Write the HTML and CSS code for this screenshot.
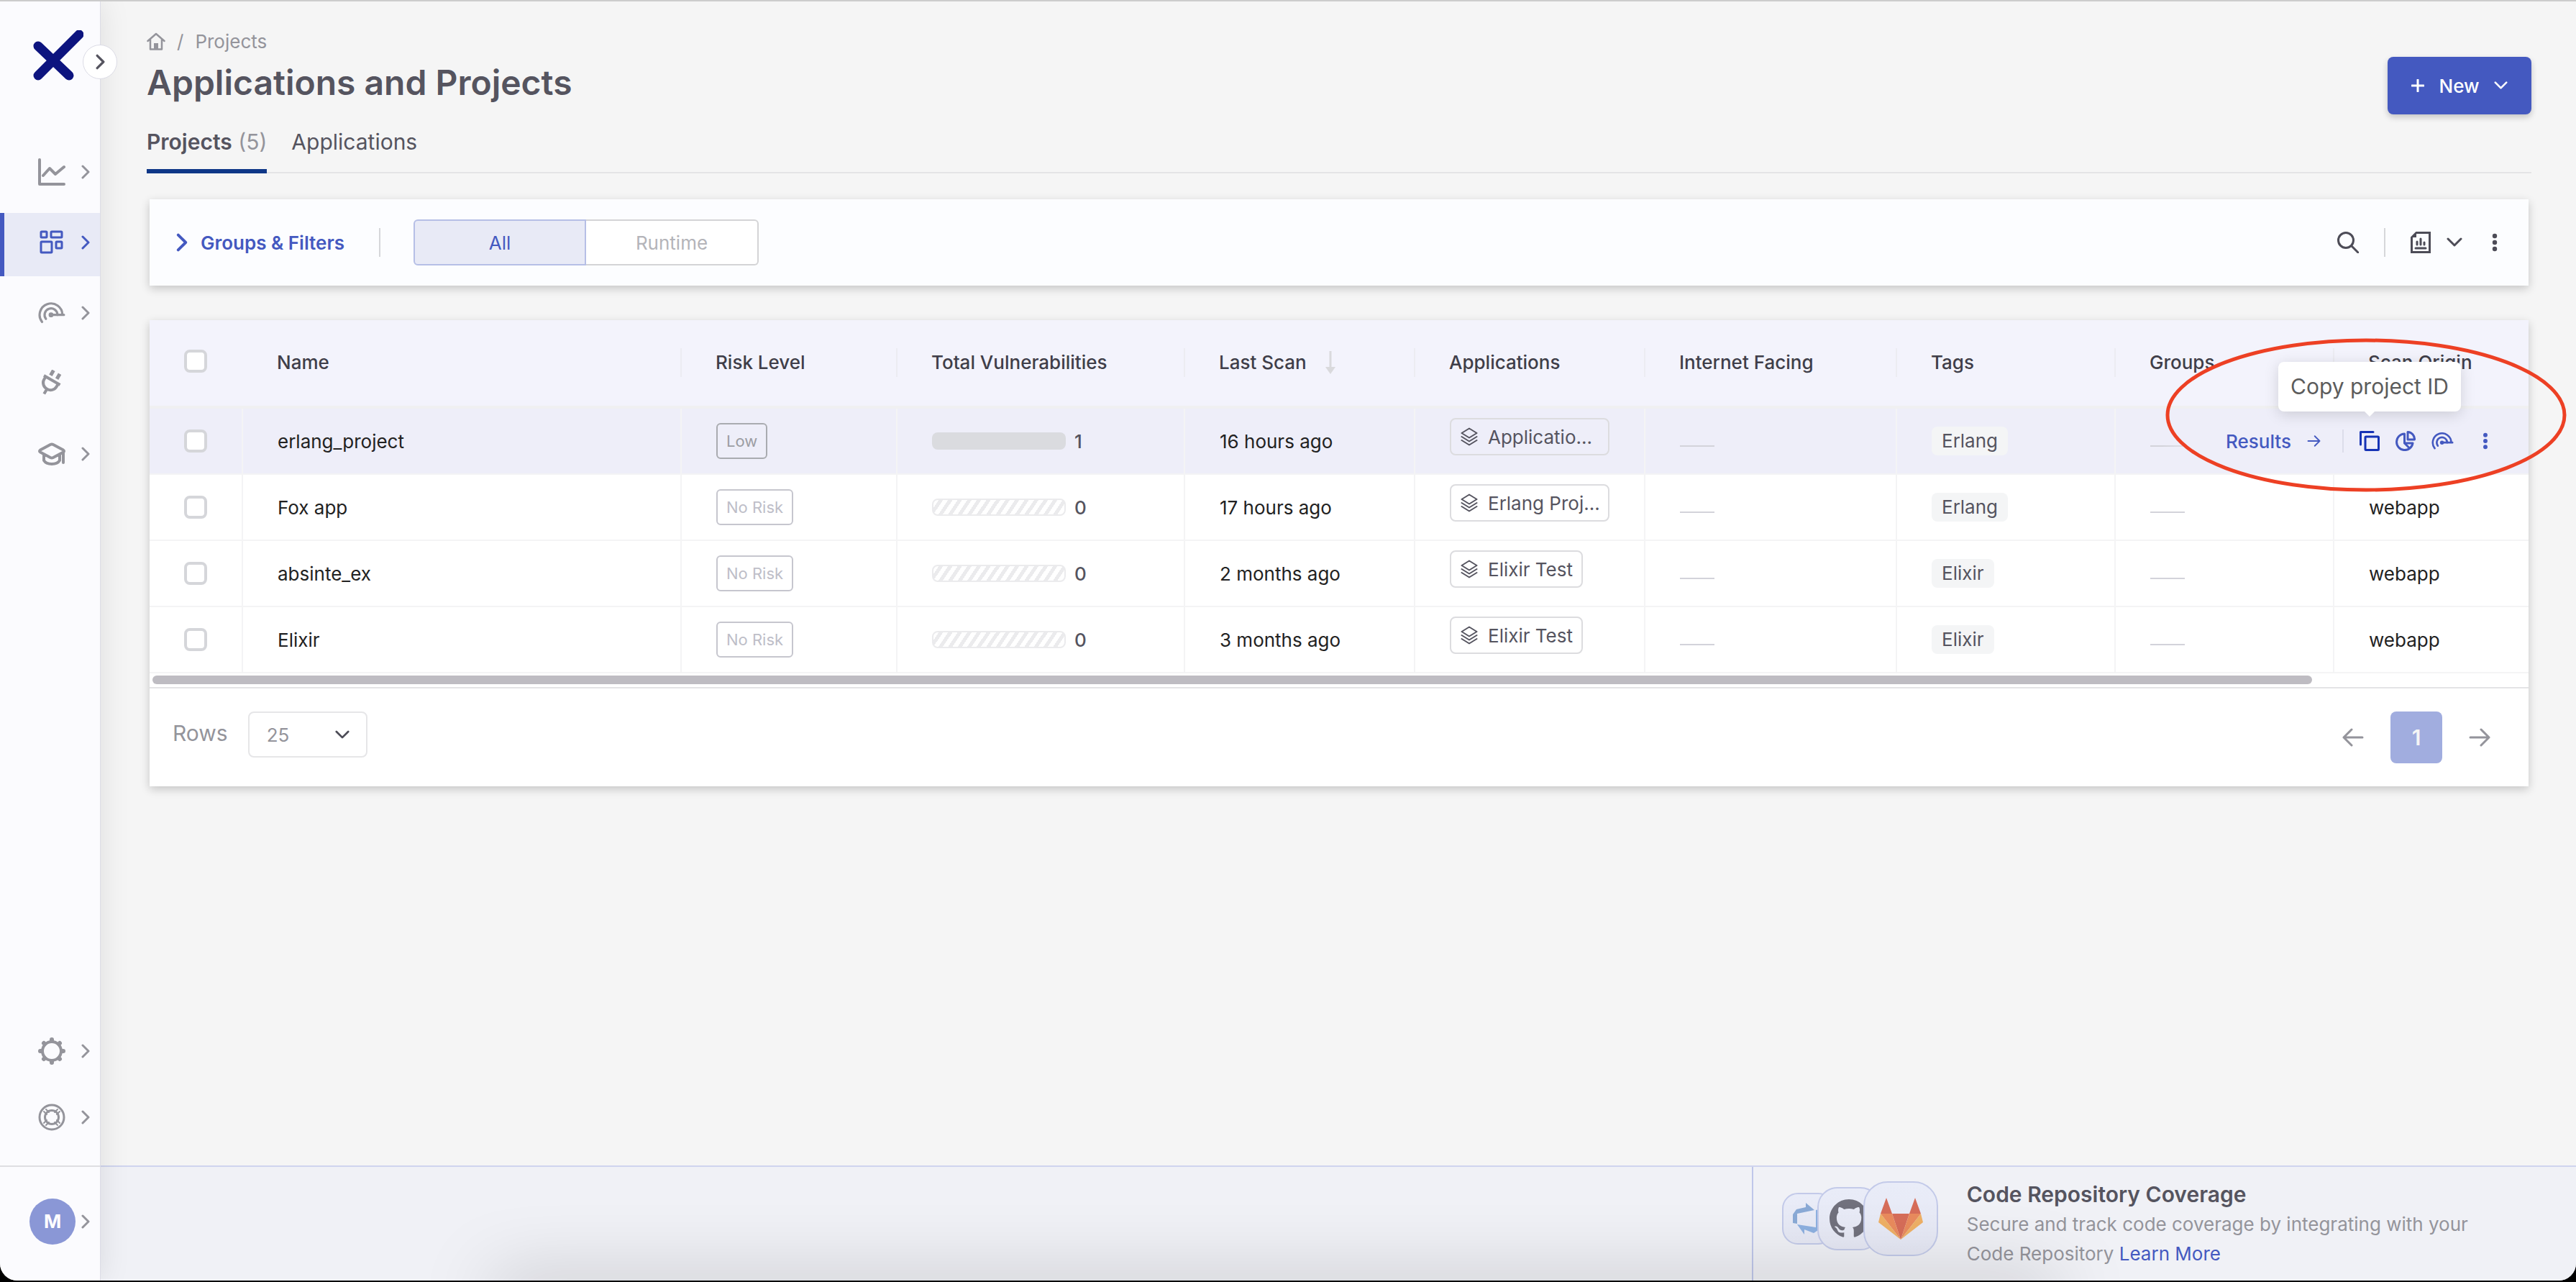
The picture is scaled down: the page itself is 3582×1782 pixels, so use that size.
FILE: index.html
```html
<!DOCTYPE html>
<html lang="en">
<head>
  <meta charset="UTF-8" />
  <meta name="viewport" content="width=device-width, initial-scale=1.0" />
  <title>Applications and Projects</title>
  <link rel="stylesheet" href="styles.css">
</head>
<body>
  <svg class="sprite" aria-hidden="true">
    <symbol id="chevron-right" viewBox="0 0 12 20"><path d="M2 2l8 8-8 8" /></symbol>
    <symbol id="chevron-down" viewBox="0 0 22 14"><path d="M2 2l9 9 9-9" /></symbol>
    <symbol id="arrow-right" viewBox="0 0 30 26"><path d="M2 13h26M17 2l11 11-11 11" /></symbol>
    <symbol id="gauge" viewBox="0 0 36 28"><path d="M5.200 25.800A15 15 0 1 1 32 16.500M17 16.500h17" /><path d="M10.300 21.800A8.500 8.500 0 1 1 25.500 16.500" /><circle cx="17" cy="16.500" r="3.200" fill="currentColor" stroke="none" /></symbol>
    <symbol id="layers" viewBox="0 0 24 26"><path d="M12 1.500l10.500 6.500L12 14.500 1.500 8zM1.500 13L12 19.500 22.500 13M1.500 18L12 24.500 22.500 18" /></symbol>
    <symbol id="dots" viewBox="0 0 8 26"><g fill="currentColor" stroke="none"><circle cx="4" cy="4" r="3.200" /><circle cx="4" cy="13" r="3.200" /><circle cx="4" cy="22" r="3.200" /></g></symbol>
  </svg>

  <div class="app">
    <aside class="sidebar">
      <a href="#" class="logo" aria-label="Home">
        <svg width="70" height="70" viewBox="0 0 70 70"><path d="M64 6L28 42 7 63M7 22l21 20 22 21" fill="none" stroke="#0d147f" stroke-width="13" stroke-linecap="round" stroke-linejoin="round" /></svg>
      </a>
      <button class="toggle" aria-label="Expand menu"><svg class="icon" width="13" height="22"><use href="#chevron-right" /></svg></button>

      <nav class="nav">
        <a href="#" aria-label="Overview">
          <svg class="icon" width="38" height="38" viewBox="0 0 38 38"><path d="M2 2v34h34M7 24l9-10 8 8 12-10" /></svg>
          <svg class="icon thin" width="12" height="20"><use href="#chevron-right" /></svg>
        </a>
        <a href="#" class="active" aria-label="Projects">
          <svg class="icon" width="38" height="38" viewBox="0 0 38 38"><rect x="4" y="4" width="8" height="8" rx="1" /><rect x="18" y="4" width="15" height="8" rx="1" /><rect x="4" y="18" width="15" height="15" rx="1" /><rect x="25" y="18" width="8" height="9" rx="1" /></svg>
          <svg class="icon thin" width="12" height="20"><use href="#chevron-right" /></svg>
        </a>
        <a href="#" aria-label="Analytics">
          <svg class="icon fine" width="38" height="30"><use href="#gauge" /></svg>
          <svg class="icon thin" width="12" height="20"><use href="#chevron-right" /></svg>
        </a>
        <a href="#" aria-label="Integrations">
          <svg class="icon" width="38" height="38" viewBox="0 0 38 38"><g transform="rotate(30 19 19)" stroke-linecap="butt"><path d="M4 15h26M7 15v5a10 9 0 0 0 20 0v-5M17 29v8" stroke-width="4" /><path d="M12 10V2M22 10V2" stroke-width="5" /></g></svg>
        </a>
        <a href="#" aria-label="Learning">
          <svg class="icon" width="38" height="32" viewBox="0 0 38 32"><path d="M17 3Q19 2 21 3L35 10.500Q37 12 35 13.500L21 21Q19 22 17 21L3 13.500Q1 12 3 10.500zM8 17v8Q11 30 19 30T30 25v-8M35 14v14" /></svg>
          <svg class="icon thin" width="12" height="20"><use href="#chevron-right" /></svg>
        </a>
      </nav>

      <nav class="nav nav-bottom">
        <a href="#" aria-label="Settings">
          <svg class="icon" width="38" height="38" viewBox="0 0 38 38"><circle cx="19" cy="19" r="13" /><path d="M19 5V3M19 35v-2M5 19H3M35 19h-2M9 9L8 8M30 30l-1-1M9 29l-1 1M30 8l-1 1" stroke-width="6" /></svg>
          <svg class="icon thin" width="12" height="20"><use href="#chevron-right" /></svg>
        </a>
        <a href="#" aria-label="Help">
          <svg class="icon fine" width="38" height="38" viewBox="0 0 38 38"><circle cx="19" cy="19" r="17" /><circle cx="19" cy="19" r="9.500" /><path d="M8 11l4 4M11 8l4 4M27 8l-4 4M30 11l-4 4M8 27l4-4M11 30l4-4M27 30l-4-4M30 27l-4-4" stroke-width="2" /></svg>
          <svg class="icon thin" width="12" height="20"><use href="#chevron-right" /></svg>
        </a>
      </nav>

      <a href="#" class="user" aria-label="Account">
        <span class="avatar">M</span>
        <svg class="icon" width="12" height="20"><use href="#chevron-right" /></svg>
      </a>
    </aside>

    <div class="page">
      <main>
        <header class="page-head">
          <div>
            <div class="breadcrumb">
              <a href="#" aria-label="Home"><svg class="icon" width="26" height="26" viewBox="0 0 26 26"><path d="M1.500 12L13 2l11.500 10M5 10v13.500h16V10" stroke-width="2.500" /><path d="M10 15h6v8h-6z" fill="currentColor" stroke="none" /></svg></a>
              <span>/</span>
              <span>Projects</span>
            </div>
            <h1>Applications and Projects</h1>
          </div>
          <button class="new-btn">
            <svg class="icon" width="18" height="18" viewBox="0 0 18 18"><path d="M9 1v16M1 9h16" /></svg>
            New
            <svg class="icon" width="19" height="12"><use href="#chevron-down" /></svg>
          </button>
        </header>

        <nav class="tabs">
          <a href="#" class="current"><b>Projects</b> <span>(5)</span></a>
          <a href="#">Applications</a>
        </nav>

        <section class="card toolbar">
          <button class="filters"><svg class="icon" width="16" height="26"><use href="#chevron-right" /></svg>Groups &amp; Filters</button>
          <i class="divider"></i>
          <div class="segmented">
            <button class="on">All</button>
            <button>Runtime</button>
          </div>
          <div class="tools">
            <button aria-label="Search"><svg class="icon" width="30" height="30" viewBox="0 0 30 30"><circle cx="12" cy="12" r="10.500" /><path d="M20 20l9 9" /></svg></button>
            <i class="divider"></i>
            <button class="report" aria-label="Reports">
              <svg class="icon" width="28" height="30" viewBox="0 0 28 30"><path d="M8 1.500h18.500v27h-25V8z" stroke-linejoin="miter" /><path d="M8 1v7H1z" fill="currentColor" stroke="none" /><path d="M7 23h14M9 18v-4M14 18v-8M19 18v-3" /></svg>
              <svg class="icon" width="22" height="14"><use href="#chevron-down" /></svg>
            </button>
            <button class="more" aria-label="More"><svg class="icon" width="8" height="26"><use href="#dots" /></svg></button>
          </div>
        </section>

        <section class="card list">
          <table>
            <colgroup>
              <col class="w-check"><col><col class="w-risk"><col class="w-vuln"><col class="w-scan"><col class="w-scan"><col class="w-facing"><col class="w-tags"><col class="w-tags"><col class="w-origin">
            </colgroup>
            <thead>
              <tr>
                <th><input type="checkbox" aria-label="Select all"></th>
                <th><div>Name</div></th>
                <th><div>Risk Level</div></th>
                <th><div>Total Vulnerabilities</div></th>
                <th><div>Last Scan <svg class="sort" width="14" height="32" viewBox="0 0 14 32"><path d="M7 0v24" stroke="#d9d9dc" stroke-width="3" /><path d="M0 22h14l-7 10z" fill="#d9d9dc" /></svg></div></th>
                <th><div>Applications</div></th>
                <th><div>Internet Facing</div></th>
                <th><div>Tags</div></th>
                <th><div>Groups</div></th>
                <th><div>Scan Origin</div></th>
              </tr>
            </thead>
            <tbody>
              <tr class="hovered">
                <td><input type="checkbox" aria-label="Select erlang_project"></td>
                <td>erlang_project</td>
                <td><span class="risk low">Low</span></td>
                <td><span class="vuln"><i class="bar full"></i>1</span></td>
                <td>16 hours ago</td>
                <td><span class="app-chip cut"><svg class="icon" width="24" height="26"><use href="#layers" /></svg><span>Applicatio...</span></span></td>
                <td><i class="dash"></i></td>
                <td><span class="tag">Erlang</span></td>
                <td><i class="dash"></i></td>
                <td>
                  <div class="actions">
                    <a href="#" class="results">Results <svg class="icon" width="19" height="16"><use href="#arrow-right" /></svg></a>
                    <i class="divider"></i>
                    <button class="copy" aria-label="Copy project ID">
                      <svg class="icon" width="28" height="28" viewBox="0 0 28 28"><rect x="8" y="8" width="18.500" height="18.500" rx="1" /><path d="M1.500 19V1.500H19" /></svg>
                      <span class="tooltip">Copy project ID</span>
                    </button>
                    <button aria-label="Overview"><svg class="icon" width="28" height="28" viewBox="0 0 28 28"><path d="M12.500 4A11.300 11.300 0 1 0 24 17H12.500zM17 1.500V12h9.500A10 10 0 0 0 17 1.500zM12.500 17l7 7" /></svg></button>
                    <button aria-label="Analytics"><svg class="icon" width="31" height="24"><use href="#gauge" /></svg></button>
                    <button class="more" aria-label="More"><svg class="icon" width="8" height="24"><use href="#dots" /></svg></button>
                  </div>
                </td>
              </tr>
              <tr>
                <td><input type="checkbox" aria-label="Select Fox app"></td>
                <td>Fox app</td>
                <td><span class="risk">No Risk</span></td>
                <td><span class="vuln"><i class="bar"></i>0</span></td>
                <td>17 hours ago</td>
                <td><span class="app-chip cut"><svg class="icon" width="24" height="26"><use href="#layers" /></svg><span>Erlang Proj...</span></span></td>
                <td><i class="dash"></i></td>
                <td><span class="tag">Erlang</span></td>
                <td><i class="dash"></i></td>
                <td>webapp</td>
              </tr>
              <tr>
                <td><input type="checkbox" aria-label="Select absinte_ex"></td>
                <td>absinte_ex</td>
                <td><span class="risk">No Risk</span></td>
                <td><span class="vuln"><i class="bar"></i>0</span></td>
                <td>2 months ago</td>
                <td><span class="app-chip"><svg class="icon" width="24" height="26"><use href="#layers" /></svg><span>Elixir Test</span></span></td>
                <td><i class="dash"></i></td>
                <td><span class="tag">Elixir</span></td>
                <td><i class="dash"></i></td>
                <td>webapp</td>
              </tr>
              <tr>
                <td><input type="checkbox" aria-label="Select Elixir"></td>
                <td>Elixir</td>
                <td><span class="risk">No Risk</span></td>
                <td><span class="vuln"><i class="bar"></i>0</span></td>
                <td>3 months ago</td>
                <td><span class="app-chip"><svg class="icon" width="24" height="26"><use href="#layers" /></svg><span>Elixir Test</span></span></td>
                <td><i class="dash"></i></td>
                <td><span class="tag">Elixir</span></td>
                <td><i class="dash"></i></td>
                <td>webapp</td>
              </tr>
            </tbody>
          </table>
          <div class="scroll"><div class="thumb"></div></div>
          <div class="pager">
            <label for="rows">Rows</label>
            <div class="select">
              <select id="rows"><option>25</option></select>
              <svg class="icon" width="20" height="13"><use href="#chevron-down" /></svg>
            </div>
            <div class="pages">
              <button aria-label="Previous page"><svg class="icon flip" width="30" height="26"><use href="#arrow-right" /></svg></button>
              <button class="num">1</button>
              <button aria-label="Next page"><svg class="icon" width="30" height="26"><use href="#arrow-right" /></svg></button>
            </div>
          </div>
          <svg class="highlight" viewBox="0 0 558 214"><ellipse cx="279" cy="107" rx="276" ry="104" fill="none" stroke="#ed4024" stroke-width="5" /></svg>
        </section>
      </main>

      <footer>
        <div class="coverage">
          <div class="repos">
            <span class="repo azure"><svg width="46" height="44" viewBox="0 0 46 44"><path d="M2 16L7 9 20 6V0l12 10-24 5v14l-6-1z" fill="#8aaad6" /><path d="M8 30l26 4V10l9-2v26l-12 8-13-5v7z" fill="#8db0e0" /></svg></span>
            <span class="repo github"><svg width="54" height="54" viewBox="0 0 16 16"><path fill="#71717d" d="M8 0C3.580 0 0 3.580 0 8c0 3.540 2.290 6.530 5.470 7.590.4.070.55-.17.55-.38 0-.19-.01-.82-.01-1.490-2.010.37-2.530-.49-2.690-.94-.09-.23-.48-.94-.82-1.130-.28-.15-.68-.52-.01-.53.63-.01 1.080.58 1.230.82.72 1.210 1.870.87 2.330.66.07-.52.28-.87.51-1.070-1.780-.2-3.640-.89-3.640-3.950 0-.87.31-1.590.82-2.150-.08-.2-.36-1.020.08-2.120 0 0 .67-.21 2.200.82.64-.18 1.320-.27 2-.27s1.360.09 2 .27c1.530-1.040 2.200-.82 2.200-.82.44 1.100.16 1.920.08 2.120.51.56.82 1.270.82 2.150 0 3.070-1.870 3.750-3.650 3.950.29.25.54.73.54 1.480 0 1.070-.01 1.930-.01 2.200 0 .21.15.46.55.38A8.010 8.010 0 0 0 16 8c0-4.420-3.580-8-8-8z" /></svg></span>
            <span class="repo gitlab"><svg width="62" height="58" viewBox="0 0 62 58"><path d="M31 58L19 22h24z" fill="#d66d59" /><path d="M31 58L3 22h16zM31 58L59 22H43z" fill="#e98b5d" /><path d="M3 22L0 34l31 24zM59 22l3 12-31 24z" fill="#eeb065" /><path d="M3 22L11 0l8 22zM59 22L51 0l-8 22z" fill="#d66d59" /></svg></span>
          </div>
          <div>
            <h2>Code Repository Coverage</h2>
            <p>Secure and track code coverage by integrating with your<br>Code Repository <a href="#">Learn More</a></p>
          </div>
        </div>
      </footer>
    </div>
    <div class="bottom-shade"></div>
  </div>
</body>
</html>
```
FILE: styles.css
```css
* {
  box-sizing: border-box;
}
body {
  margin: 0;
  padding-bottom: 2px;
  height: 100vh;
  background: #000;
  color: #222;
  font-family: Inter, "Liberation Sans", sans-serif;
  font-size: 26px;
}
a {
  color: inherit;
  text-decoration: none;
}
button {
  padding: 0;
  border: none;
  background: none;
  font: inherit;
  color: inherit;
  cursor: pointer;
}
.sprite {
  display: none;
}
.icon {
  display: block;
  flex: none;
  fill: none;
  stroke: currentColor;
  stroke-width: 3;
  stroke-linecap: round;
  stroke-linejoin: round;
}
.divider {
  width: 2px;
  height: 40px;
  background: #d6d7da;
}
.app {
  position: relative;
  display: flex;
  height: 100%;
  overflow: hidden;
  border-top: 2px solid #ccc;
  border-radius: 0 0 24px 24px;
  background: #f5f5f5;
}

/* sidebar */
.sidebar {
  position: relative;
  z-index: 2;
  display: flex;
  flex-direction: column;
  flex: none;
  width: 140px;
  border-right: 1px solid #dcdce6;
  background: #fbfbfe;
  box-shadow: 0 0 40px rgba(0, 0, 0, 0.1);
  color: #94949b;
}
.logo {
  margin: 40px 0 86px 46px;
  height: 70px;
}
.toggle {
  position: absolute;
  top: 60px;
  right: -24px;
  width: 48px;
  height: 48px;
  display: flex;
  align-items: center;
  justify-content: center;
  border: 1px solid #dcdce6;
  border-radius: 50%;
  background: #fff;
  color: #55545f;
}
.nav {
  display: flex;
  flex-direction: column;
  gap: 10px;
}
.nav a {
  display: flex;
  align-items: center;
  justify-content: space-between;
  height: 88px;
  padding: 0 14px 6px 53px;
}
.nav .icon {
  stroke-width: 4;
}
.nav .thin,
.nav .fine,
.nav .active .icon {
  stroke-width: 3;
}
.nav .active {
  background: #e8eaf6;
  box-shadow: inset 6px 0 #4459c0;
  color: #4459c0;
}
.nav-bottom {
  gap: 4px;
  margin-top: auto;
  margin-bottom: 20px;
}
.user {
  display: flex;
  align-items: center;
  justify-content: space-between;
  height: 160px;
  padding: 0 14px 6px 41px;
  border-top: 2px solid #dedee2;
}
.avatar {
  width: 64px;
  height: 64px;
  border-radius: 50%;
  background: #8a97d6;
  color: #fff;
  font-weight: 700;
  line-height: 64px;
  text-align: center;
}

/* page */
.page {
  display: flex;
  flex: 1;
  flex-direction: column;
  min-width: 0;
}
main {
  flex: 1;
  padding: 36px 62px 0 64px;
}
.page-head {
  display: flex;
  align-items: flex-start;
  justify-content: space-between;
}
.breadcrumb {
  display: flex;
  align-items: center;
  gap: 16px;
  line-height: 40px;
  color: #94949b;
}
h1 {
  margin: 3px 0 2px;
  color: #55545f;
  font-size: 48px;
  font-weight: 600;
  line-height: 68px;
}
.new-btn {
  display: flex;
  align-items: center;
  justify-content: center;
  gap: 20px;
  width: 200px;
  height: 80px;
  margin-top: 41px;
  border-radius: 8px;
  background: #4459c0;
  box-shadow: 0 4px 8px rgba(0, 0, 0, 0.2);
  color: #fff;
  font-weight: 500;
}
.tabs {
  display: flex;
  gap: 34px;
  height: 82px;
  border-bottom: 2px solid #e4e4e6;
  color: #55545f;
  font-size: 30px;
  line-height: 76px;
}
.tabs a {
  height: 82px;
}
.tabs b {
  font-weight: 600;
}
.tabs span {
  color: #94949b;
}
.tabs .current {
  border-bottom: 6px solid #0f3787;
}
.card {
  position: relative;
  margin: 0 4px;
  background: #fff;
  box-shadow: 0 4px 12px rgba(0, 0, 0, 0.2);
}
.toolbar {
  display: flex;
  align-items: center;
  height: 120px;
  margin-top: 36px;
  padding: 0 43px 0 37px;
  background: #fcfdff;
}
.filters {
  display: flex;
  align-items: center;
  gap: 18px;
  margin-right: 48px;
  color: #4459c0;
  font-weight: 600;
}
.segmented {
  display: flex;
  margin-left: 46px;
}
.segmented button {
  width: 240px;
  height: 64px;
  border: 2px solid #d4d4d6;
  border-left: none;
  border-radius: 0 6px 6px 0;
  background: #fff;
  color: #b4b4b9;
}
.segmented .on {
  border: 2px solid #b6bfe6;
  border-radius: 6px 0 0 6px;
  background: #e8eaf6;
  color: #4459c0;
}
.tools {
  display: flex;
  align-items: center;
  gap: 35px;
  margin-left: auto;
  color: #4d4c57;
}
.report {
  display: flex;
  align-items: center;
  gap: 22px;
}
.tools .more {
  margin-left: 6px;
}

/* table */
.list {
  margin-top: 48px;
}
table {
  width: 100%;
  table-layout: fixed;
  border-collapse: separate;
  border-spacing: 0;
}
.w-check {
  width: 130px;
}
.w-risk {
  width: 300px;
}
.w-vuln {
  width: 400px;
}
.w-scan {
  width: 320px;
}
.w-facing {
  width: 350px;
}
.w-tags {
  width: 304px;
}
.w-origin {
  width: 270px;
}
th {
  height: 123px;
  padding: 0 0 2px 47px;
  border-bottom: 4px solid #f0f0f1;
  background: #f3f3fc;
  color: #3f3e49;
  font-weight: 500;
  text-align: left;
  white-space: nowrap;
}
th:first-child {
  padding: 0 0 6px 48px;
}
th div {
  display: flex;
  align-items: center;
  gap: 26px;
  height: 40px;
  border-right: 2px solid #ececf2;
}
th:last-child div {
  border: none;
}
td {
  height: 92px;
  padding: 0 0 0 48px;
  border-right: 2px solid #f4f4f5;
  border-bottom: 2px solid #f4f4f5;
  white-space: nowrap;
}
td:last-child {
  position: relative;
  border-right: none;
}
.hovered td {
  background: #eeeef9;
}
input[type="checkbox"] {
  display: block;
  appearance: none;
  width: 32px;
  height: 32px;
  margin: 0;
  border: 4px solid #d5d6da;
  border-radius: 8px;
  background: #fff;
}
.risk {
  display: inline-block;
  padding: 0 12px;
  border: 2px solid #c6c6ce;
  border-radius: 6px;
  color: #bebec8;
  font-size: 22px;
  line-height: 46px;
}
.low {
  border-color: #a9abb0;
  color: #9c9da3;
}
.vuln {
  display: flex;
  align-items: center;
  gap: 12px;
  color: #55545f;
  font-weight: 500;
}
.bar {
  width: 186px;
  height: 24px;
  border: 2px solid #ebebed;
  border-radius: 8px;
  background: repeating-linear-gradient(124deg, #fff 0 6px, #ebebed 6px 11px);
}
.full {
  border: none;
  background: #dadbdf;
}
.app-chip {
  display: inline-flex;
  align-items: center;
  gap: 14px;
  height: 52px;
  margin-bottom: 12px;
  padding: 0 12px 0 13px;
  border: 2px solid #dcdcdf;
  border-radius: 8px;
  color: #55545f;
  vertical-align: middle;
}
.cut {
  width: 222px;
}
.app-chip .icon {
  stroke-width: 2;
}
.dash {
  display: block;
  width: 48px;
  height: 2px;
  margin-top: 14px;
  background: #d3d3da;
}
.tag {
  display: inline-block;
  padding: 0 14px;
  border-radius: 8px;
  background: #f4f5f6;
  color: #55545f;
  line-height: 40px;
}

/* row actions shown on hover */
.actions {
  position: absolute;
  top: 0;
  right: 0;
  display: flex;
  align-items: center;
  gap: 22px;
  height: 90px;
  padding: 0 56px 0 90px;
  background: linear-gradient(to right, transparent, #eeeef9 80px);
  color: #4459c0;
}
.results {
  display: flex;
  align-items: center;
  gap: 22px;
  margin-right: 8px;
  font-weight: 500;
}
.actions .divider {
  height: 32px;
  background: #dcddea;
}
.actions .more {
  margin-left: 18px;
}
.copy {
  position: relative;
  color: #1633b5;
}
.tooltip {
  position: absolute;
  bottom: 55px;
  left: 50%;
  z-index: 1;
  padding: 0 17px;
  transform: translateX(-50%);
  border-radius: 8px;
  background: #fff;
  box-shadow: 0 4px 20px rgba(0, 0, 0, 0.15);
  color: #5c5c5c;
  font-size: 30px;
  line-height: 69px;
}
.tooltip::after {
  content: "";
  position: absolute;
  top: 100%;
  left: 50%;
  margin-left: -7px;
  border: 7px solid transparent;
  border-top-color: #fff;
}
.highlight {
  position: absolute;
  top: 25px;
  right: -53px;
  z-index: 3;
  width: 558px;
  height: 214px;
  pointer-events: none;
}
.scroll {
  padding: 3px 4px 4px;
  border-bottom: 2px solid #e4e4e6;
}
.thumb {
  width: 91%;
  height: 12px;
  border-radius: 6px;
  background: #bebcc2;
}
.pager {
  display: flex;
  align-items: flex-start;
  padding: 32px 53px 32px 32px;
  color: #94949b;
}
.pager label {
  margin-right: 28px;
  font-size: 30px;
  line-height: 60px;
}
.select {
  position: relative;
}
.select select {
  width: 166px;
  height: 64px;
  padding: 0 24px;
  appearance: none;
  border: 2px solid #e6e6e8;
  border-radius: 8px;
  background: #fff;
  color: #94949b;
  font: inherit;
}
.select .icon {
  position: absolute;
  top: 26px;
  right: 25px;
  color: #4d4c57;
}
.pages {
  display: flex;
  gap: 37px;
  margin-left: auto;
}
.flip {
  transform: scaleX(-1);
}
.num {
  width: 72px;
  height: 72px;
  border-radius: 8px;
  background: #a1addf;
  color: #f5f5f5;
  font-size: 30px;
  font-weight: 600;
}

/* footer */
footer {
  display: flex;
  justify-content: flex-end;
  height: 160px;
  border-top: 2px solid #cfd4ee;
  background: #f0f1f6;
}
.coverage {
  display: flex;
  gap: 40px;
  width: 32vw;
  padding-left: 40px;
  border-left: 2px solid #bfc7ea;
}
.repos {
  display: flex;
  align-items: center;
  height: 144px;
}
.repo {
  display: flex;
  align-items: center;
  justify-content: center;
  border: 2px solid #c3cae9;
  background: linear-gradient(#e9ecf8, #e6e8f4);
}
.azure {
  width: 72px;
  height: 72px;
  border-radius: 22px;
}
.github {
  width: 88px;
  height: 88px;
  margin-left: -23px;
  border-radius: 28px;
}
.gitlab {
  width: 104px;
  height: 104px;
  margin-left: -24px;
  border-radius: 34px;
}
h2 {
  margin: 18px 0 0;
  color: #55545f;
  font-size: 30px;
  font-weight: 600;
  line-height: 41px;
}
footer p {
  margin: 0;
  color: #94949b;
  line-height: 41px;
}
footer p a {
  color: #4459c0;
}
.bottom-shade {
  position: absolute;
  bottom: -40px;
  left: 19%;
  z-index: 1;
  width: 61%;
  height: 40px;
  border-radius: 20px;
  box-shadow: 0 0 100px rgba(0, 0, 0, 0.26);
  pointer-events: none;
}
```
